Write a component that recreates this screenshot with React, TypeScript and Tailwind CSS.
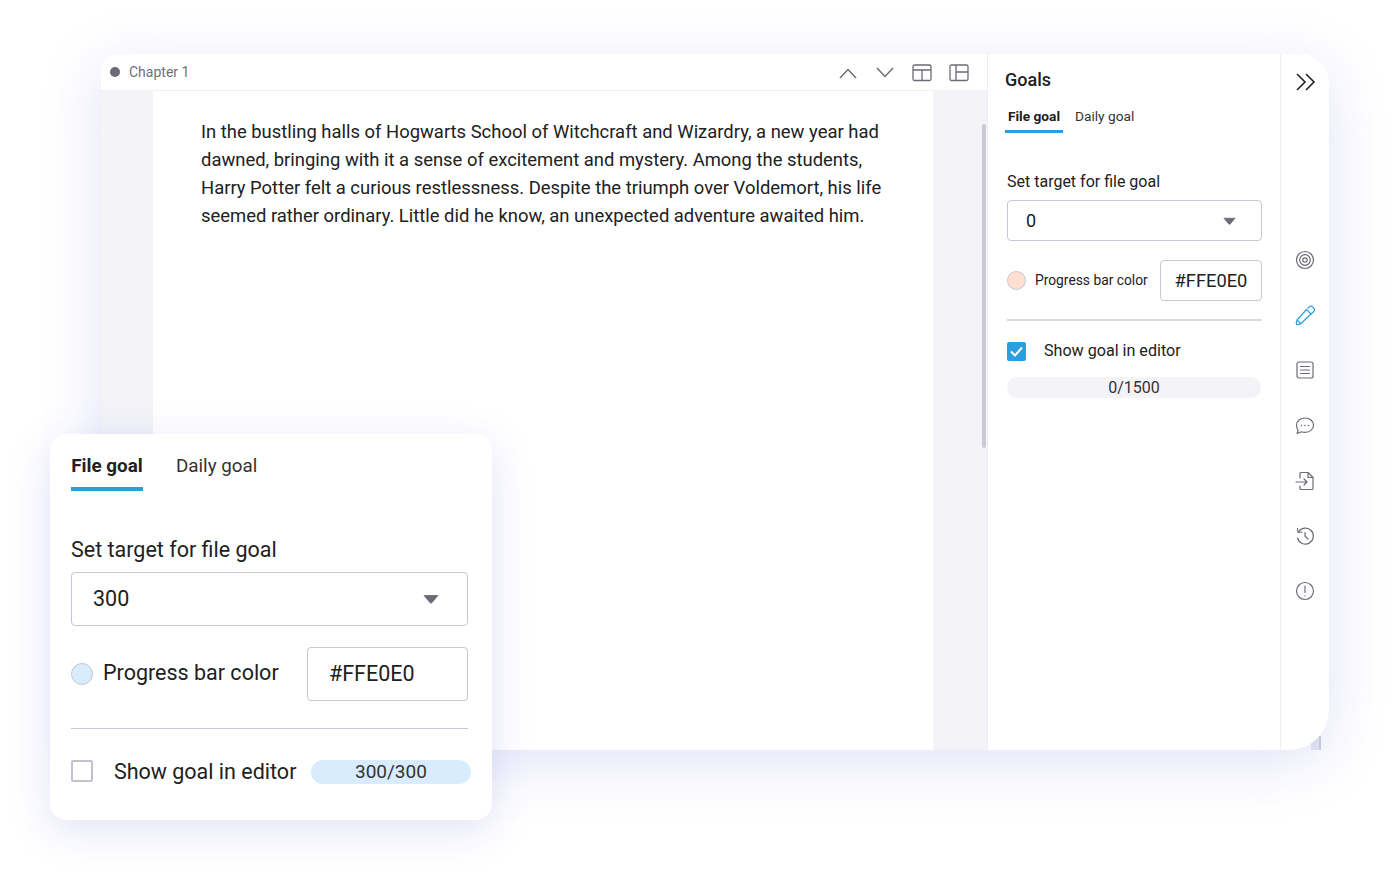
import React from "react";

const Ic = ({ children, color = "#6b6b76", w = 1.2 }: { children: React.ReactNode; color?: string; w?: number }) => (
  <svg width="22" height="22" viewBox="0 0 22 22" fill="none" stroke={color} strokeWidth={w} strokeLinecap="round" strokeLinejoin="round">
    {children}
  </svg>
);

const Caret = ({ w, h }: { w: number; h: number }) => (
  <svg width={w} height={h} viewBox="0 0 14 8"><path d="M1 1h12L8 7a1.3 1.3 0 0 1-2 0z" fill="#6b6b76" stroke="#6b6b76" strokeWidth="0.8" strokeLinejoin="round" /></svg>
);

export default function App() {
  return (
    <div className="relative w-[1393px] h-[878px] overflow-hidden bg-white pt-[54px] pl-[101px] font-['Roboto',sans-serif] text-[#212121]">
      <div className="relative z-10 w-[1228px] h-[696px] flex bg-white rounded-tl-2xl rounded-tr-[28px] rounded-br-[40px] overflow-hidden shadow-[0_12px_60px_rgba(110,110,220,0.2)]">
        {/* Editor */}
        <div className="w-[886px] flex flex-col">
          <div className="h-[37px] flex items-center border-b border-[#f1f1f5] pl-[9px] shrink-0">
            <span className="w-[10px] h-[10px] rounded-full bg-[#6b6b76]" />
            <span className="ml-[9px] mt-[1px] text-[14px] text-[#6f6f78]">Chapter 1</span>
            <div className="ml-auto flex items-center pr-[17px] gap-[15px]">
              <svg width="22" height="22" viewBox="0 0 22 22" fill="none" stroke="#6b6b76" strokeWidth="1.5"><path d="M3 17l8-8.500 8 8.500" /></svg>
              <svg width="22" height="22" viewBox="0 0 22 22" fill="none" stroke="#6b6b76" strokeWidth="1.5"><path d="M3 7l8 8.500 8-8.500" /></svg>
              <svg width="22" height="22" viewBox="0 0 22 22" fill="none" stroke="#6b6b76" strokeWidth="1.3"><rect x="2" y="4" width="18" height="15.500" rx="1.5" /><path d="M2 9h18M11 9v10" /></svg>
              <svg width="22" height="22" viewBox="0 0 22 22" fill="none" stroke="#6b6b76" strokeWidth="1.3"><rect x="2" y="4" width="18" height="15.500" rx="1.5" /><path d="M8 4v15M8 11h12" /></svg>
            </div>
          </div>
          <div className="flex-1 flex bg-[#f3f3f8] min-h-0">
            <div className="w-[52px]" />
            <div className="w-[780px] bg-white pl-[48px] pr-[48px] pt-[27px] text-[18.43px] leading-[28px] text-[#212121]">
              In the bustling halls of Hogwarts School of Witchcraft and Wizardry, a new year had dawned, bringing with it a sense of excitement and mystery. Among the students, Harry Potter felt a curious restlessness. Despite the triumph over Voldemort, his life seemed rather ordinary. Little did he know, an unexpected adventure awaited him.
            </div>
            <div className="flex-1 flex justify-end pr-[1px] pt-[33px]">
              <div className="w-[4px] h-[324px] rounded-full bg-[#c9cad3]" />
            </div>
          </div>
        </div>

        {/* Goals panel */}
        <div className="w-[294px] border-l border-[#ededf2] border-r border-r-[#ededf2] pt-[15px] flex flex-col shrink-0">
          <div className="pl-[17px] text-[18px] font-medium leading-[21px] text-[#212121]">Goals</div>
          <div className="flex pl-[17px] mt-[16px] text-[13.7px] leading-[20px]">
            <div className="w-[58px] h-[27px] border-b-[3px] border-[#2a9fdf] text-center font-bold">File goal</div>
            <div className="ml-[12px] text-[#333]">Daily goal</div>
          </div>
          <div className="pl-[19px] pr-[18px] mt-[39px]">
            <div className="text-[16px] leading-[19px]">Set target for file goal</div>
            <div className="mt-[9px] h-[41px] rounded border border-[#c5c7d3] flex items-center pl-[18px] pr-[25px] justify-between text-[18px]">
              <span>0</span>
              <Caret w={13} h={8} />
            </div>
            <div className="mt-[19px] flex items-center">
              <span className="w-[19px] h-[19px] rounded-full bg-[#ffe0d0] border border-[#c5c7d3]" />
              <span className="ml-[9px] text-[13.8px] w-[125px]">Progress bar color</span>
              <div className="h-[41px] flex-1 rounded border border-[#c5c7d3] flex items-center justify-center text-[18.3px]">#FFE0E0</div>
            </div>
            <div className="mt-[18px] h-[2px] bg-[#d9d9e2]" />
            <div className="mt-[21px] flex items-center h-[19px]">
              <span className="w-[19px] h-[19px] rounded-[2px] bg-[#2a9fdf] flex items-center justify-center">
                <svg width="13" height="11" viewBox="0 0 13 11" fill="none" stroke="#fff" strokeWidth="2"><path d="M1 5.5l4 4 7-8" /></svg>
              </span>
              <span className="ml-[18px] text-[16.1px]">Show goal in editor</span>
            </div>
            <div className="mt-[16px] mr-[1px] h-[21px] rounded-full bg-[#f3f3f8] flex items-center justify-center text-[16px] text-[#333]">0/1500</div>
          </div>
        </div>

        {/* Icon rail */}
        <div className="flex-1 flex flex-col items-center">
          <svg className="mt-[17px] ml-[1px]" width="22" height="22" viewBox="0 0 22 22" fill="none" stroke="#212121" strokeWidth="1.6"><path d="M2 3l8 8-8 8M11 3l8 8-8 8" /></svg>
          <div className="mt-[156px] flex flex-col gap-[33.2px]">
            <Ic><circle cx="11" cy="11" r="8.5" /><circle cx="11" cy="11" r="5.3" /><circle cx="11" cy="11" r="2.2" /></Ic>
            <div className="translate-y-[1px]">
              <Ic color="#2a9fdf"><path d="M2.500 19.500c-.4-1.500-.2-3.200.5-4.500L12.500 4.500l4.500 4.500L7 18.500c-1.300.8-3 1.300-4.500 1z" /><path d="M14 3l1.500-1.300a2 2 0 0 1 2.700 0l1.800 1.800a2 2 0 0 1 0 2.700L17 9" /><path d="M3.500 15.500l3 3" /></Ic>
            </div>
            <Ic><rect x="3" y="3" width="16" height="16" rx="2" /><path d="M6.500 7.500h9M6.500 11h9M6.500 14.500h9" /></Ic>
            <Ic><path d="M11 3c4.700 0 8.500 3 8.500 7.200s-3.800 7.200-8.500 7.200c-1.300 0-2.500-.2-3.500-.6L3 18.500l1.200-3.200C3 14 2.500 12.200 2.500 10.200 2.500 6 6.300 3 11 3z" /><path d="M7.500 10.500h.01M11 10.500h.01M14.500 10.500h.01" strokeWidth="1.6" /></Ic>
            <Ic><path d="M6 8V3.500a1 1 0 0 1 1-1h7l5 5v11a1 1 0 0 1-1 1H7a1 1 0 0 1-1-1V16" /><path d="M14 2.500v5h5" /><path d="M2 12h11M10 9l3 3-3 3" /></Ic>
            <Ic><path d="M4.500 7a8 8 0 1 1-.9 6" /><path d="M3.500 3.500L4 7.500l4-.5" /><path d="M11 7.500V11l3 3" /></Ic>
            <Ic><circle cx="11" cy="11" r="8.500" /><path d="M11 6v6.500M11 15.500v.3" /></Ic>
          </div>
        </div>
      </div>

      <div className="absolute left-[1311px] top-[736px] w-[10px] h-[14px] bg-[#e8e8f2] border-r-2 border-[#d0d1de]" />

      {/* Floating card */}
      <div className="absolute z-20 left-[50px] top-[434px] w-[442px] h-[386px] bg-white rounded-2xl shadow-[0_10px_40px_rgba(110,110,220,0.2)] px-[21px] pt-[20px]">
        <div className="flex text-[18.8px] leading-[24px]">
          <div className="w-[72px] h-[37px] border-b-[4px] border-[#2a9fdf] font-bold text-center whitespace-nowrap">File goal</div>
          <div className="ml-[33px] text-[#333]">Daily goal</div>
        </div>
        <div className="mt-[46px] text-[21.5px] leading-[26px]">Set target for file goal</div>
        <div className="mt-[9px] w-[397px] h-[54px] rounded border border-[#c5c7d3] flex items-center pl-[21px] pr-[28px] justify-between text-[21.5px]">
          <span>300</span>
          <Caret w={16} h={10} />
        </div>
        <div className="mt-[21px] w-[397px] flex items-center">
          <span className="w-[22px] h-[22px] rounded-full bg-[#d8ecfd] border border-[#c5c7d3]" />
          <span className="ml-[10px] mb-[1px] text-[21.5px] w-[204px] whitespace-nowrap">Progress bar color</span>
          <div className="h-[54px] flex-1 rounded border border-[#c5c7d3] flex items-center pl-[21px] text-[21.5px]">#FFE0E0</div>
        </div>
        <div className="mt-[27px] w-[397px] h-[1px] bg-[#c5c7d3]" />
        <div className="mt-[31px] flex items-center h-[24px]">
          <span className="w-[22px] h-[22px] mb-[2px] rounded-[2px] border-2 border-[#c0c2cf]" />
          <span className="ml-[21px] text-[21.5px] w-[198px] whitespace-nowrap">Show goal in editor</span>
          <div className="w-[161px] h-[24px] rounded-full bg-[#d8ecfd] flex items-center justify-center text-[19px] text-[#333]">300/300</div>
        </div>
      </div>
    </div>
  );
}
